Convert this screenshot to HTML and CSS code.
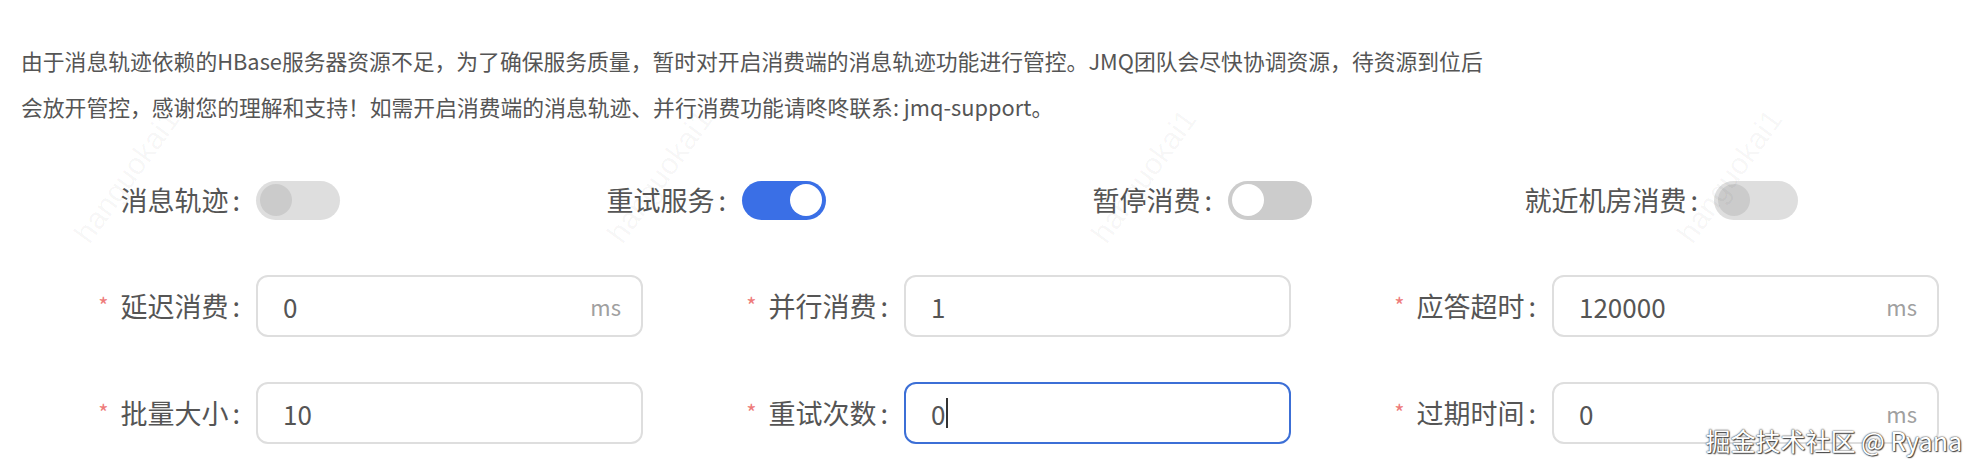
FILE: index.html
```html
<!DOCTYPE html>
<html lang="zh-CN">
<head>
<meta charset="utf-8">
<link rel="stylesheet" href="styles.css">
</head>
<body>
<div class="page">
  <p class="notice">由于消息轨迹依赖的HBase服务器资源不足，为了确保服务质量，暂时对开启消费端的消息轨迹功能进行管控。JMQ团队会尽快协调资源，待资源到位后会放开管控，感谢您的理解和支持！如需开启消费端的消息轨迹、并行消费功能请咚咚联系: jmq-support。</p>

  <div class="form">
    <div class="row row-switch">
      <div class="item">
        <label class="label">消息轨迹<span class="colon">:</span></label>
        <span class="switch switch-disabled"><span class="knob"></span></span>
      </div>
      <div class="item">
        <label class="label">重试服务<span class="colon">:</span></label>
        <span class="switch switch-on"><span class="knob"></span></span>
      </div>
      <div class="item">
        <label class="label">暂停消费<span class="colon">:</span></label>
        <span class="switch switch-off"><span class="knob"></span></span>
      </div>
      <div class="item">
        <label class="label">就近机房消费<span class="colon">:</span></label>
        <span class="switch switch-disabled"><span class="knob"></span></span>
      </div>
    </div>

    <div class="row row-input">
      <div class="item">
        <label class="label"><span class="req">*</span>延迟消费<span class="colon">:</span></label>
        <div class="input"><span class="val">0</span><span class="unit">ms</span></div>
      </div>
      <div class="item">
        <label class="label"><span class="req">*</span>并行消费<span class="colon">:</span></label>
        <div class="input"><span class="val">1</span></div>
      </div>
      <div class="item">
        <label class="label"><span class="req">*</span>应答超时<span class="colon">:</span></label>
        <div class="input"><span class="val">120000</span><span class="unit">ms</span></div>
      </div>
    </div>

    <div class="row row-input row-last">
      <div class="item">
        <label class="label"><span class="req">*</span>批量大小<span class="colon">:</span></label>
        <div class="input"><span class="val">10</span></div>
      </div>
      <div class="item">
        <label class="label"><span class="req">*</span>重试次数<span class="colon">:</span></label>
        <div class="input input-focus"><span class="val">0<span class="caret"></span></span></div>
      </div>
      <div class="item">
        <label class="label"><span class="req">*</span>过期时间<span class="colon">:</span></label>
        <div class="input"><span class="val">0</span><span class="unit">ms</span></div>
      </div>
    </div>
  </div>

  <span class="wm wm1">hanguokai1</span>
  <span class="wm wm2">hanguokai1</span>
  <span class="wm wm3">hanguokai1</span>
  <span class="wm wm4">hanguokai1</span>
  <span class="credit">掘金技术社区 @ Ryana</span>
</div>
</body>
</html>
```

FILE: styles.css
```css
html, body {
  margin: 0;
  padding: 0;
  background: #ffffff;
}

.page {
  position: relative;
  width: 1978px;
  height: 474px;
  overflow: hidden;
  font-family: "Noto Sans CJK SC", "Noto Sans", sans-serif;
  color: #555555;
}

.notice {
  margin: 0;
  padding: 38px 0 0 21px;
  width: 1464px;
  font-size: 21.8px;
  line-height: 46px;
  color: #555555;
}

.form {
  margin-left: 17px;
  width: 1944px;
}

.row {
  display: grid;
  align-items: center;
}

.row-switch {
  grid-template-columns: repeat(4, 486px);
  margin-top: 50px;
  height: 40px;
}

.row-input {
  grid-template-columns: repeat(3, 648px);
  margin-top: 55px;
  height: 62px;
}

.row-last {
  margin-top: 45px;
}

.item {
  display: flex;
  align-items: center;
}

.label {
  flex: none;
  width: 223px;
  padding-right: 16px;
  text-align: right;
  font-size: 27px;
  line-height: 40px;
  color: #555555;
  white-space: nowrap;
}

.colon {
  margin-left: 4px;
}

.req {
  color: #ee7b7b;
  font-size: 22px;
  margin-right: 12px;
  position: relative;
  top: -3px;
}

.switch {
  position: relative;
  flex: none;
  width: 84px;
  height: 39px;
  border-radius: 20px;
  box-sizing: border-box;
}

.switch .knob {
  position: absolute;
  top: 3.5px;
  width: 32px;
  height: 32px;
  border-radius: 50%;
}

.switch-disabled {
  background: #dedede;
}

.switch-disabled .knob {
  left: 3.5px;
  background: #cbcbcb;
}

.switch-on {
  background: #3a6fe6;
}

.switch-on .knob {
  right: 4px;
  background: #ffffff;
}

.switch-off {
  background: #cccccc;
}

.switch-off .knob {
  left: 4px;
  background: #ffffff;
}

.input {
  flex: none;
  width: 387px;
  height: 62px;
  box-sizing: border-box;
  border: 2px solid #dedede;
  border-radius: 12px;
  padding: 0 20px 0 25px;
  display: flex;
  align-items: center;
  justify-content: space-between;
}

.input-focus {
  border-color: #3c6fd6;
}

.val {
  font-size: 26px;
  color: #555555;
  display: flex;
  align-items: center;
}

.caret {
  display: inline-block;
  width: 2px;
  height: 30px;
  background: #333333;
  margin-left: 1px;
}

.unit {
  font-size: 22px;
  color: #a0a0a0;
}

.wm {
  position: absolute;
  font-family: "Liberation Sans", sans-serif;
  font-size: 30px;
  color: rgba(0, 0, 0, 0.045);
  transform: rotate(-54deg);
  transform-origin: left bottom;
  white-space: nowrap;
}

.wm1 { left: 95px; top: 215px; }
.wm2 { left: 628px; top: 215px; }
.wm3 { left: 1112px; top: 215px; }
.wm4 { left: 1698px; top: 215px; }

.credit {
  position: absolute;
  right: 16px;
  bottom: 16px;
  font-size: 25px;
  color: #ffffff;
  text-shadow: 0 0 2px #444, 0 0 1px #444, 1px 1px 1px #444;
}
```
